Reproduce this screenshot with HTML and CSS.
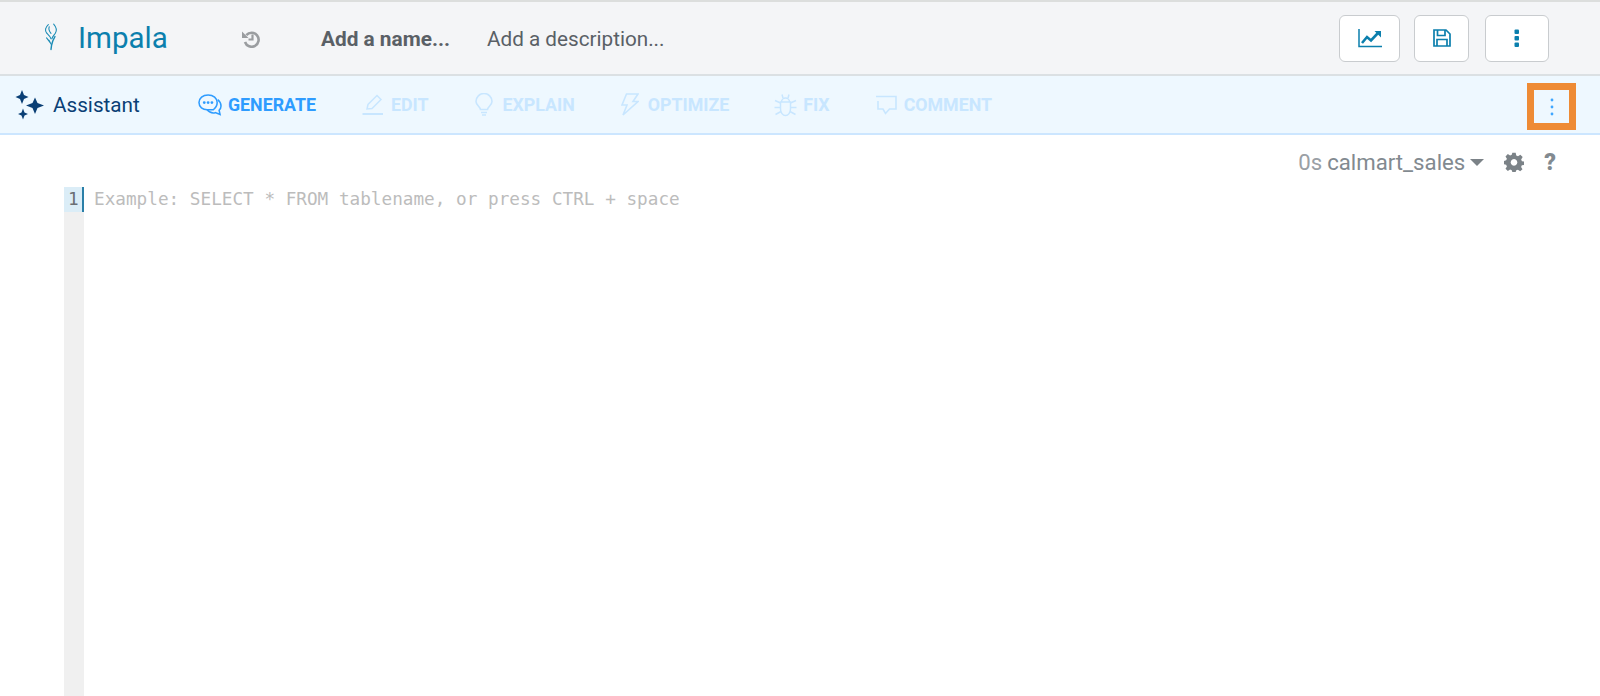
FILE: index.html
```html
<!DOCTYPE html>
<html lang="en">
<head>
<meta charset="utf-8">
<title>Impala</title>
<link rel="stylesheet" href="styles.css">
</head>
<body>
<header class="topbar">
  <div class="brand">
    <svg class="brand-icon" viewBox="0 0 18 30" fill="none" stroke="#1a8bb5" stroke-width="1.2" stroke-linecap="round"><path d="M6 1C2.500 4 2 8 4 10.500C6 12.500 8 14 9 17"/><path d="M12 0.500C15 4 15.500 8 14 10.500C12.500 13 10.500 14.500 10 17"/><path d="M7 3.500C6 6 7 8.500 9 11"/><path d="M4 16L7.500 20.500"/><path d="M13.500 14.500L11 19.500L9.700 24L9 29" stroke-width="1.600"/><path d="M6.500 18.500L9 23"/></svg>
    <span class="brand-name">Impala</span>
  </div>
  <svg class="history" viewBox="0 0 18 18" fill="none" stroke="#9a9da0" stroke-width="2.600"><path d="M4.300 5.200A7 7 0 1 1 3 12"/><path d="M0 1.500V8H6.500Z" fill="#9a9da0" stroke="none"/><path d="M10.500 4.500V9.500H6.500" stroke-width="2.200"/></svg>
  <span class="doc-name">Add a name...</span>
  <span class="doc-desc">Add a description...</span>
  <div class="actions">
    <button class="btn btn-chart" type="button"><svg width="24" height="20" viewBox="0 0 24 20" fill="none" stroke="#0b7fad"><path d="M1 1V18.500H24" stroke-width="1.500"/><path d="M4 15L9 9L13 12.500L20 5" stroke-width="2.600"/><path d="M16.500 3H23V9.500Z" fill="#0b7fad" stroke="none"/></svg></button>
    <button class="btn btn-save" type="button"><svg width="18" height="18" viewBox="0 0 18 18" fill="none" stroke="#0b7fad" stroke-width="1.700"><path d="M1 1H13L17 5V17H1Z"/><path d="M4.500 1V6.500H12V1"/><path d="M4 17V10.500H14V17"/></svg></button>
    <button class="btn btn-more" type="button"><svg width="6" height="18" viewBox="0 0 6 18" fill="#0b7fad"><rect x="0.500" y="0.500" width="4.500" height="4.500" rx="1"/><rect x="0.500" y="7" width="4.500" height="4.500" rx="1"/><rect x="0.500" y="13.500" width="4.500" height="4.500" rx="1"/></svg></button>
  </div>
</header>

<nav class="assistant">
  <svg class="sparkles" viewBox="0 0 30 30" fill="#0a3f75"><path d="M7 0L9 5L13.500 7L9 9L7 14L5 9L0.500 7L5 5Z"/><path d="M20 7.500L22.500 13L29 15.500L22.500 18L20 24L17.500 18L11 15.500L17.500 13Z"/><path d="M8 18.500L9.500 22.500L13 24L9.500 25.500L8 29.500L6.500 25.500L3 24L6.500 22.500Z"/></svg>
  <span class="assistant-title">Assistant</span>
  <div class="tools">
    <a class="tool tool-generate"><svg width="24" height="23" viewBox="0 0 25 24" fill="none" stroke="#2e9cff" stroke-width="1.600"><path d="M10.500 2C5 2 1 5.500 1 10C1 14.500 5 17.500 9.500 17.500H16C18.500 15.500 20 13 20 10C20 5.500 16 2 10.500 2Z"/><path d="M20.500 7C23 9 24 11 24 13.500C24 15.500 23 17 22 18L23 22.500L18 20.500C16 21 12 20.500 9.500 17.500"/><circle cx="6.500" cy="10" r="0.700" fill="#2e9cff"/><circle cx="10.500" cy="10" r="0.700" fill="#2e9cff"/><circle cx="14.500" cy="10" r="0.700" fill="#2e9cff"/></svg><span>GENERATE</span></a>
    <a class="tool tool-edit"><svg width="22" height="21" viewBox="0 0 22 21" fill="none" stroke="#c8e6ff" stroke-width="1.500"><path d="M5 15L6 10.500L15 1.500L19 5.500L10 14.500Z"/><path d="M0.500 20H21" stroke-width="2"/></svg><span>EDIT</span></a>
    <a class="tool tool-explain"><svg width="18" height="23" viewBox="0 0 18 23" fill="none" stroke="#c8e6ff" stroke-width="1.600"><path d="M5.500 16.500C5 13.500 1 12 1 8.500A8 8 0 0 1 17 8.500C17 12 13 13.500 12.500 16.500Z"/><path d="M6 19.500H12M7 22H11"/></svg><span>EXPLAIN</span></a>
    <a class="tool tool-optimize"><svg width="18" height="23" viewBox="0 0 18 23" fill="none" stroke="#c8e6ff" stroke-width="1.600"><path d="M5.500 1H17L12 8.500H17L2 22L6 12H1Z"/></svg><span>OPTIMIZE</span></a>
    <a class="tool tool-fix"><svg width="25" height="24" viewBox="0 0 25 24" fill="none" stroke="#c8e6ff" stroke-width="1.500"><path d="M7.500 9H17.500V16A5 6.500 0 0 1 7.500 16Z"/><path d="M8.500 9A4 4 0 0 1 16.500 9"/><path d="M9 1.500L10 5M16 1.500L15 5M7.500 10L2 7.500M17.500 10L23 7.500M7.500 14.500H1.500M17.500 14.500H23.500M8 18.500L2.500 21.500M17 18.500L22.500 21.500"/></svg><span>FIX</span></a>
    <a class="tool tool-comment"><svg width="22" height="20" viewBox="0 0 22 20" fill="none" stroke="#c8e6ff" stroke-width="1.600"><path d="M1 1.500H21V14H14.500L10.500 18.500L8 14H3V6"/></svg><span>COMMENT</span></a>
  </div>
  <button class="assistant-more" type="button"><svg width="4" height="18" viewBox="0 0 4 18" fill="#3ea6ff"><circle cx="2" cy="2" r="1.400"/><circle cx="2" cy="9" r="1.400"/><circle cx="2" cy="16" r="1.400"/></svg></button>
</nav>

<main class="editor-area">
  <div class="status">
    <span class="status-time">0s</span>
    <span class="status-db">calmart_sales</span>
    <span class="caret"></span>
    <svg class="gear" viewBox="0 0 24 24" fill="#7b8287"><path fill-rule="evenodd" d="M10 1H14L14.700 4.200L16.800 5.100L19.600 3.300L22.400 6.100L20.600 8.900L21.500 11L24 11.500V15.500L21.400 16L20.500 18L22.200 20.800L19.400 23L16.700 21.200L14.700 22L14 24H10L9.300 21.900L7.300 21.100L4.600 22.800L1.800 20L3.500 17.300L2.600 15.300L0 14.700V10.700L2.600 10L3.500 8L1.800 5.300L4.600 2.500L7.300 4.200L9.300 3.400ZM12 8.500A4 4 0 1 0 12.010 8.500Z"/></svg>
    <span class="help">?</span>
  </div>
  <div class="editor">
    <div class="gutter"><div class="gutter-line">1</div></div>
    <div class="code"><div class="code-line"><span class="cursor"></span>Example: SELECT * FROM tablename, or press CTRL + space</div></div>
  </div>
</main>
</body>
</html>
```
FILE: styles.css
```css
* { box-sizing: border-box; }
html, body { margin: 0; height: 100%; }
body {
  width: 1600px;
  height: 696px;
  overflow: hidden;
  background: #fff;
  font-family: Roboto, "Liberation Sans", sans-serif;
  display: flex;
  flex-direction: column;
}
.topbar {
  height: 76px;
  flex: none;
  display: flex;
  align-items: center;
  background: #f4f5f7;
  border-top: 2px solid #dcdedd;
  border-bottom: 2px solid #dbe0e3;
  padding-left: 43px;
}
.brand { display: flex; align-items: center; width: 199px; }
.brand-icon { width: 16px; height: 28px; margin-right: 19px; margin-top: -3px; }
.brand-name { font-size: 29.500px; color: #0b7fad; }
.history { width: 18px; height: 18px; margin-top: 2px; }
.doc-name { margin-left: 61px; margin-top: 2px; font-size: 20.800px; font-weight: 700; color: #5a6066; }
.doc-desc { margin-left: 37px; margin-top: 2px; font-size: 20.700px; color: #5a6066; }
.actions { margin-left: auto; display: flex; gap: 14px; margin-right: 51px; }
.btn {
  height: 47px;
  padding: 0;
  display: flex;
  align-items: center;
  justify-content: center;
  background: #fff;
  border: 1.500px solid #c9cccf;
  border-radius: 6px;
}
.btn-chart { width: 61px; }
.btn-save { width: 55px; }
.btn-more { width: 64px; margin-left: 2px; }
.assistant {
  height: 59px;
  flex: none;
  display: flex;
  align-items: center;
  background: #eef8ff;
  border-bottom: 2px solid #cce6ff;
  padding-left: 15px;
}
.sparkles { width: 30px; height: 30px; }
.assistant-title { margin-left: 8px; width: 145px; font-size: 20.700px; color: #0a3f75; }
.tools { display: flex; align-items: center; }
.tool {
  display: flex;
  align-items: center;
  gap: 6px;
  font-size: 17.800px;
  font-weight: 700;
  color: #c8e6ff;
}
.tool-generate { color: #2e9cff; }
.tool-edit { margin-left: 46px; gap: 7px; }
.tool-explain { margin-left: 46px; gap: 10px; }
.tool-optimize { margin-left: 46px; gap: 9px; }
.tool-fix { margin-left: 44px; gap: 5px; }
.tool-comment { margin-left: 45px; gap: 7px; }
.assistant-more {
  margin-left: auto;
  margin-right: 24px;
  margin-top: 4px;
  width: 49px;
  height: 47px;
  padding: 0;
  display: flex;
  align-items: center;
  justify-content: center;
  background: transparent;
  border: 7px solid #ee8b35;
}
.editor-area { flex: 1; display: flex; flex-direction: column; min-height: 0; }
.status {
  height: 52px;
  flex: none;
  display: flex;
  align-items: center;
  justify-content: flex-end;
  padding-top: 2px;
  padding-right: 44px;
  font-size: 22.200px;
  color: #828a90;
}
.status-time { color: #9aa0a5; }
.status-db { margin-left: 5px; }
.caret {
  margin-left: 5px;
  border-left: 7px solid transparent;
  border-right: 7px solid transparent;
  border-top: 7px solid #7b8287;
}
.gear { width: 20px; height: 20px; margin-left: 20px; }
.help { margin-left: 20px; font-size: 23px; font-weight: 900; }
.editor { flex: 1; display: flex; padding-left: 64px; min-height: 0; }
.gutter { width: 20px; background: #f0f0f0; }
.gutter-line {
  height: 25px;
  background: #dbedf7;
  font: 17.700px/25px "DejaVu Sans Mono", monospace;
  color: #6a6f73;
  padding-left: 4px;
}
.code { flex: 1; }
.code-line {
  position: relative;
  height: 25px;
  padding-left: 10px;
  font: 17.700px/24px "DejaVu Sans Mono", monospace;
  color: #bcbcbc;
}
.cursor { position: absolute; left: -2px; top: 0; width: 2px; height: 25px; background: #2a7fa8; }
```
